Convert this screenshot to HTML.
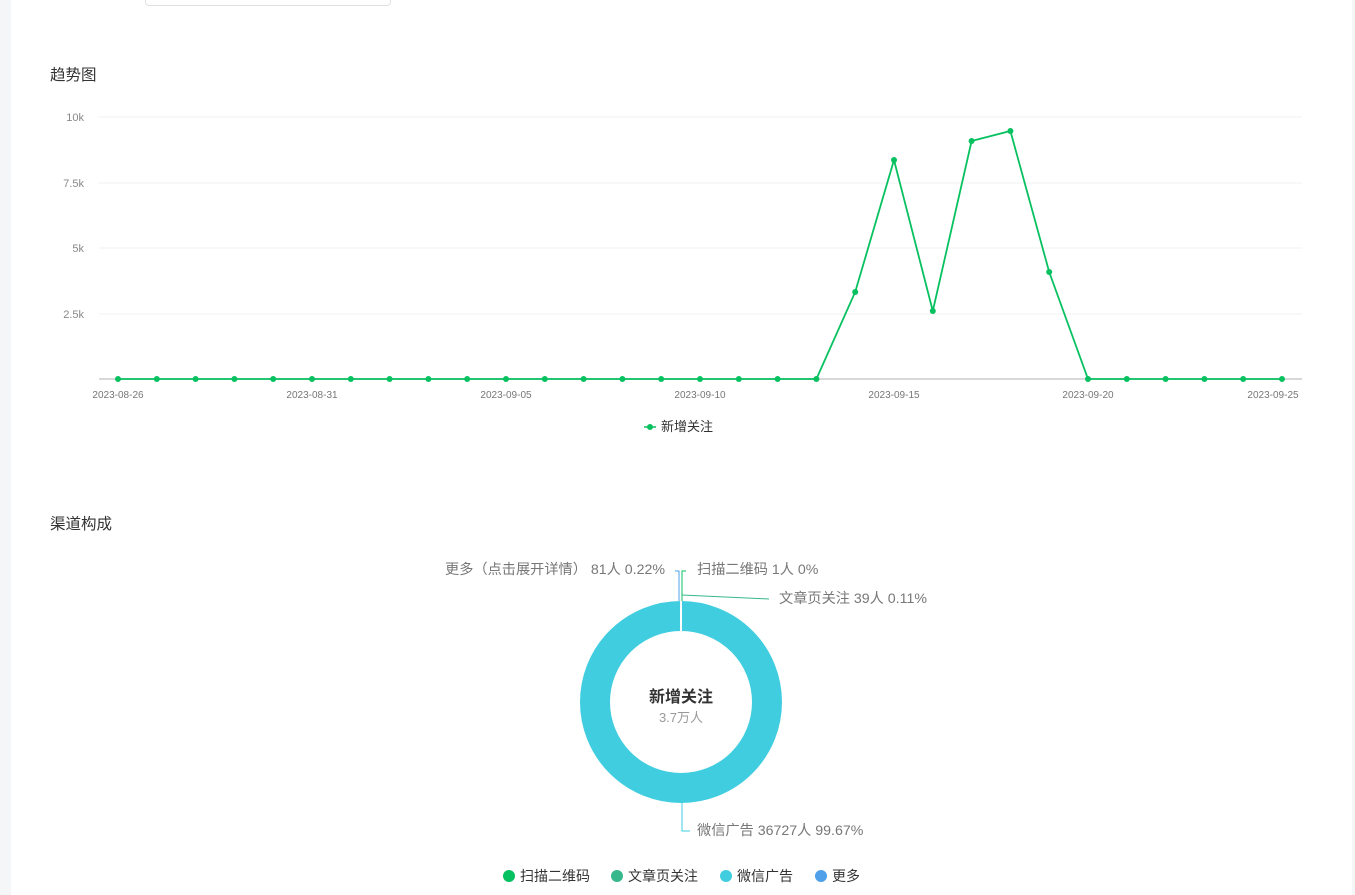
<!DOCTYPE html>
<html><head><meta charset="utf-8"><style>
html,body{margin:0;padding:0;width:1355px;height:895px;overflow:hidden;background:#f5f6f8;font-family:"Liberation Sans","Noto Sans CJK SC",sans-serif}
.card{position:absolute;left:11px;top:0;width:1341px;height:895px;background:#fff}
.sel{position:absolute;left:145px;top:-10px;width:244px;height:14px;border:1px solid #e0e0e0;border-radius:4px;background:#fff}
</style></head><body>
<div class="card"></div>
<div class="sel"></div>
<svg width="1355" height="895" style="position:absolute;left:0;top:0" font-family="Liberation Sans, Noto Sans CJK SC, sans-serif">
<text x="50" y="80" font-size="15.5" fill="#333">趋势图</text>
<text x="50" y="529" font-size="15.5" fill="#333">渠道构成</text>
<g stroke="#f0f0f0" stroke-width="1">
<line x1="99" y1="117" x2="1302" y2="117"/><line x1="99" y1="183" x2="1302" y2="183"/><line x1="99" y1="248" x2="1302" y2="248"/><line x1="99" y1="314" x2="1302" y2="314"/>
</g>
<line x1="99" y1="379" x2="1302" y2="379" stroke="#ccc" stroke-width="1.5"/>
<g font-size="11" fill="#888" text-anchor="end">
<text x="84" y="121">10k</text><text x="84" y="187">7.5k</text><text x="84" y="252">5k</text><text x="84" y="318">2.5k</text>
</g>
<g font-size="10" fill="#777" text-anchor="middle">
<text x="118" y="398">2023-08-26</text><text x="312" y="398">2023-08-31</text><text x="506" y="398">2023-09-05</text><text x="700" y="398">2023-09-10</text><text x="894" y="398">2023-09-15</text><text x="1088" y="398">2023-09-20</text><text x="1273" y="398">2023-09-25</text>
</g>
<polyline fill="none" stroke="#07c160" stroke-width="1.8" points="118,379 816.4,379 855.2,292 894,160 932.8,311 971.6,141 1010.4,131 1049.2,272 1088,379 1282,379"/>
<g fill="#07c160">
<circle cx="118" cy="379" r="3"/><circle cx="156.8" cy="379" r="3"/><circle cx="195.6" cy="379" r="3"/><circle cx="234.4" cy="379" r="3"/><circle cx="273.2" cy="379" r="3"/><circle cx="312" cy="379" r="3"/><circle cx="350.8" cy="379" r="3"/><circle cx="389.6" cy="379" r="3"/><circle cx="428.4" cy="379" r="3"/><circle cx="467.2" cy="379" r="3"/><circle cx="506" cy="379" r="3"/><circle cx="544.8" cy="379" r="3"/><circle cx="583.6" cy="379" r="3"/><circle cx="622.4" cy="379" r="3"/><circle cx="661.2" cy="379" r="3"/><circle cx="700" cy="379" r="3"/><circle cx="738.8" cy="379" r="3"/><circle cx="777.6" cy="379" r="3"/><circle cx="816.4" cy="379" r="3"/><circle cx="855.2" cy="292" r="3"/><circle cx="894" cy="160" r="3"/><circle cx="932.8" cy="311" r="3"/><circle cx="971.6" cy="141" r="3"/><circle cx="1010.4" cy="131" r="3"/><circle cx="1049.2" cy="272" r="3"/><circle cx="1088" cy="379" r="3"/><circle cx="1126.8" cy="379" r="3"/><circle cx="1165.6" cy="379" r="3"/><circle cx="1204.4" cy="379" r="3"/><circle cx="1243.2" cy="379" r="3"/><circle cx="1282" cy="379" r="3"/>
</g>
<line x1="644" y1="427" x2="656" y2="427" stroke="#07c160" stroke-width="1.5"/><circle cx="650" cy="427" r="3" fill="#07c160"/>
<text x="661" y="431" font-size="13" fill="#333">新增关注</text>
<circle cx="681" cy="702" r="86" fill="none" stroke="#40cde0" stroke-width="30"/>
<line x1="681" y1="601" x2="681" y2="632" stroke="#fff" stroke-width="2"/>
<text x="681" y="702" font-size="16" font-weight="bold" fill="#333" text-anchor="middle">新增关注</text>
<text x="681" y="722" font-size="13" fill="#999" text-anchor="middle">3.7万人</text>
<g stroke-width="1" fill="none">
<polyline points="679,601 679,571 675,571" stroke="#4ea1e8"/>
<polyline points="682,601 682,571 686,571" stroke="#07c160"/>
<polyline points="682,595 769,599" stroke="#36b88c"/>
<polyline points="682,802 682,831 690,831" stroke="#40cde0"/>
</g>
<g font-size="14.2" fill="#777">
<text x="665" y="574" text-anchor="end">更多（点击展开详情） 81人 0.22%</text>
<text x="697" y="574">扫描二维码 1人 0%</text>
<text x="779" y="603">文章页关注 39人 0.11%</text>
<text x="697" y="835">微信广告 36727人 99.67%</text>
</g>
<g font-size="14" fill="#333">
<circle cx="509" cy="876" r="6" fill="#07c160"/><text x="520" y="881">扫描二维码</text>
<circle cx="617" cy="876" r="6" fill="#36b88c"/><text x="628" y="881">文章页关注</text>
<circle cx="726" cy="876" r="6" fill="#40cde0"/><text x="737" y="881">微信广告</text>
<circle cx="821" cy="876" r="6" fill="#4ea1e8"/><text x="832" y="881">更多</text>
</g>
</svg>
</body></html>
